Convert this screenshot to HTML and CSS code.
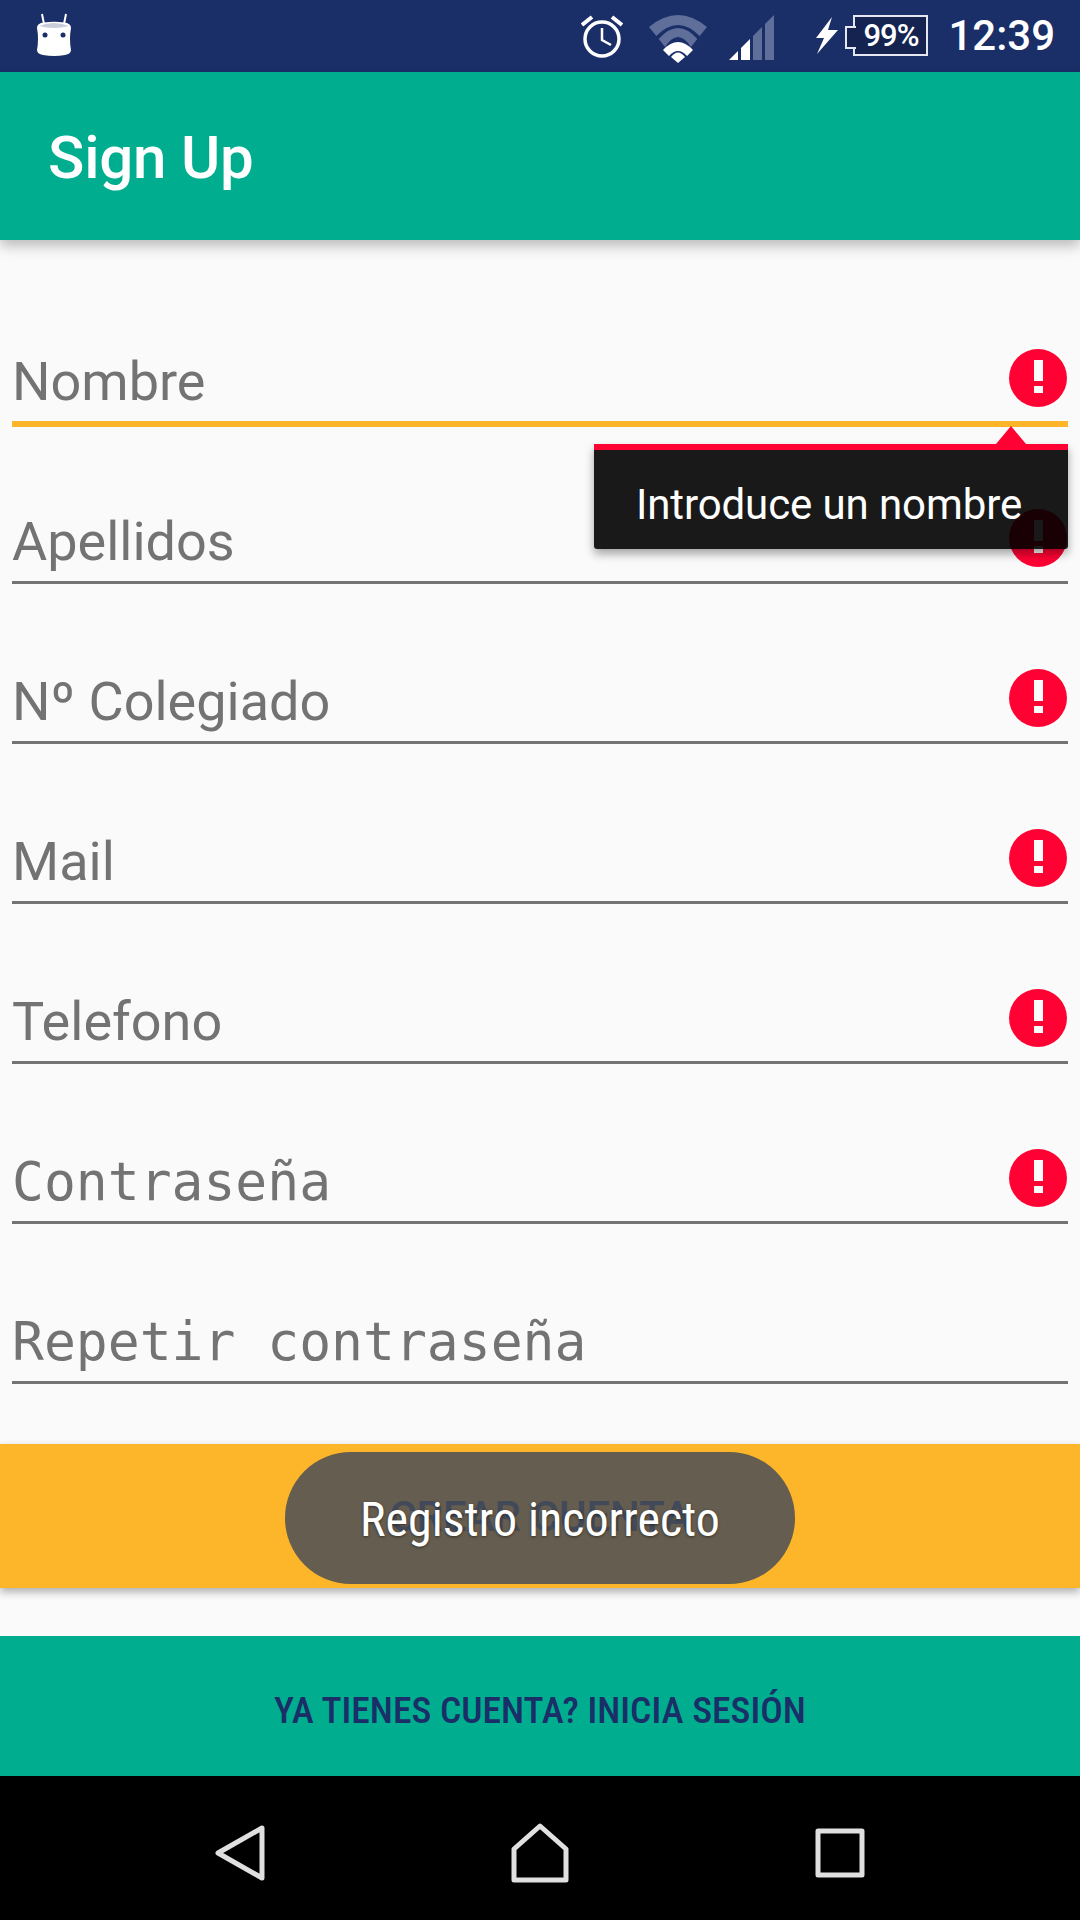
FILE: index.html
```html
<!DOCTYPE html>
<html lang="es">
<head>
  <meta charset="UTF-8">
  <meta name="viewport" content="width=device-width, initial-scale=1.0">
  <title>Sign Up</title>
  <link rel="stylesheet" href="styles.css">
</head>
<body>
  <div class="page">

    <div class="status-bar">
      <svg class="ic-android" width="36" height="46" viewBox="0 0 36 46">
        <path d="M8 12L6 2M28 12L30 2" stroke="#fff" stroke-width="2"/>
        <path d="M1 16Q1 11 8 10.500Q18 9 28 10.500Q35 11 35 16Q33 27 35 38Q35 42 29 43Q18 45 7 43Q1 42 1 38Q3 27 1 16Z" fill="#fff"/>
        <path d="M3 14Q18 8 33 14Q18 18 3 14Z" fill="#c9cdd9"/>
        <circle cx="9" cy="23" r="2.500" fill="#1a2e68"/>
        <circle cx="27" cy="23" r="2.500" fill="#1a2e68"/>
      </svg>
      <div class="status-right">
        <svg class="ic-alarm" width="42" height="44" viewBox="0 0 42 44">
          <circle cx="21" cy="24" r="17" fill="none" stroke="#fff" stroke-width="3.500"/>
          <path d="M21 13V25L30 30" fill="none" stroke="#fff" stroke-width="2.500"/>
          <path d="M1 10L11 2M41 10L31 2" stroke="#fff" stroke-width="4"/>
        </svg>
        <svg class="ic-wifi" width="58" height="48" viewBox="0 0 58 48">
          <path d="M0 12Q29 -12 58 12L50.700 21Q29 -1 7.300 21Z" fill="#5f6f9a"/>
          <path d="M9.700 24Q29 2 48.300 24L41.900 32Q29 12 16.100 32Z" fill="#5f6f9a"/>
          <path d="M14 35Q29 19 44 35L38 41Q29 31 20 41Z" fill="#fff"/>
          <path d="M22 42Q29 33 36 42L29 48Z" fill="#fff"/>
        </svg>
        <svg class="ic-signal" width="45" height="45" viewBox="0 0 45 45">
          <path d="M0 45H9V36Z" fill="#fff"/>
          <path d="M12 45H21V24L12 33Z" fill="#fff"/>
          <path d="M24 45H33V12L24 21Z" fill="#5f6f9a"/>
          <path d="M36 45H45V0L36 9Z" fill="#5f6f9a"/>
        </svg>
        <svg class="ic-bolt" width="23" height="37" viewBox="0 0 23 37">
          <path d="M17 0L1 21H9L2 37L23 13H13Z" fill="#fff"/>
        </svg>
        <div class="battery"><span class="battery-text">99%</span></div>
        <span class="clock">12:39</span>
      </div>
    </div>

    <header class="app-bar">
      <h1 class="app-title">Sign Up</h1>
    </header>

    <main class="form">
      <div class="field focused">
        <span class="label">Nombre</span>
        <span class="error-icon"><i class="mark"></i><i class="dot"></i></span>
      </div>
      <div class="field">
        <span class="label">Apellidos</span>
        <span class="error-icon"><i class="mark"></i><i class="dot"></i></span>
      </div>
      <div class="field">
        <span class="label">Nº Colegiado</span>
        <span class="error-icon"><i class="mark"></i><i class="dot"></i></span>
      </div>
      <div class="field">
        <span class="label">Mail</span>
        <span class="error-icon"><i class="mark"></i><i class="dot"></i></span>
      </div>
      <div class="field">
        <span class="label">Telefono</span>
        <span class="error-icon"><i class="mark"></i><i class="dot"></i></span>
      </div>
      <div class="field">
        <span class="label mono">Contraseña</span>
        <span class="error-icon"><i class="mark"></i><i class="dot"></i></span>
      </div>
      <div class="field">
        <span class="label mono">Repetir contraseña</span>
      </div>
    </main>

    <button class="btn-create">CREAR CUENTA</button>
    <button class="btn-login">YA TIENES CUENTA? INICIA SESIÓN</button>

    <nav class="nav-bar">
      <svg width="50" height="56" viewBox="0 0 50 56">
        <path d="M47 3V53L3 28Z" fill="none" stroke="#e0e0e0" stroke-width="5" stroke-linejoin="round"/>
      </svg>
      <svg width="58" height="60" viewBox="0 0 58 60">
        <path d="M3 57V26L29 3L55 26V57Z" fill="none" stroke="#e0e0e0" stroke-width="5" stroke-linejoin="round"/>
      </svg>
      <svg width="50" height="50" viewBox="0 0 50 50">
        <rect x="3" y="3" width="44" height="44" fill="none" stroke="#e0e0e0" stroke-width="5" stroke-linejoin="round"/>
      </svg>
    </nav>

    <div class="error-popup">
      <span class="popup-arrow"></span>
      Introduce un nombre
    </div>

    <div class="toast"><span class="toast-text">Registro incorrecto</span></div>

  </div>
</body>
</html>
```
FILE: styles.css
```css
* {
  box-sizing: border-box;
}

body {
  margin: 0;
  background-color: #fafafa;
  font-family: 'Roboto', sans-serif;
}

.page {
  position: relative;
  width: 1080px;
  height: 1920px;
  display: flex;
  flex-direction: column;
  overflow: hidden;
}

/* status bar */
.status-bar {
  height: 72px;
  flex: none;
  background-color: #1a2e68;
  display: flex;
  justify-content: space-between;
  align-items: flex-start;
  padding: 0 25px 0 36px;
}

.ic-android {
  margin-top: 12px;
}

.status-right {
  display: flex;
  align-items: flex-start;
}

.ic-alarm {
  margin-top: 15px;
  margin-right: 26px;
}

.ic-wifi {
  margin-top: 15px;
  margin-right: 22px;
}

.ic-signal {
  margin-top: 15px;
  margin-right: 41px;
}

.ic-bolt {
  margin-top: 17px;
  margin-right: 15px;
}

.battery {
  position: relative;
  width: 75px;
  height: 41px;
  margin-top: 15px;
  margin-right: 20px;
  border: 2px solid #e4e7ef;
  background-color: #14234f;
  display: flex;
  align-items: center;
  justify-content: center;
}

.battery::before {
  content: '';
  position: absolute;
  left: -10px;
  top: 9px;
  width: 9px;
  height: 19px;
  border: 2px solid #e4e7ef;
  border-right: none;
  background-color: #14234f;
}

.battery-text {
  color: #fff;
  font-size: 31px;
  font-weight: 500;
  letter-spacing: -1px;
}

.clock {
  color: #fff;
  font-size: 42px;
  font-weight: 500;
  line-height: 72px;
}

/* app bar */
.app-bar {
  height: 168px;
  flex: none;
  background-color: #00ae8f;
  display: flex;
  align-items: center;
  padding-left: 48px;
  padding-top: 2px;
  box-shadow: 0 6px 12px rgba(0,0,0,0.25);
  z-index: 1;
}

.app-title {
  margin: 0;
  color: #fff;
  font-size: 60px;
  font-weight: 500;
  letter-spacing: -0.2px;
}

/* form */
.form {
  padding: 24px 12px 0;
}

.field {
  height: 160px;
  display: flex;
  justify-content: space-between;
  align-items: flex-end;
  border-bottom: 3px solid #737373;
}

.field.focused {
  height: 163px;
  border-bottom: 6px solid #fdb62a;
  margin-bottom: -3px;
}

.label {
  color: #737373;
  font-size: 54px;
  line-height: 64px;
  padding-bottom: 7px;
}

.mono {
  font-family: 'DejaVu Sans Mono', monospace;
  font-size: 53px;
}

.error-icon {
  width: 58px;
  height: 58px;
  margin: 0 1px 14px 0;
  border-radius: 50%;
  background-color: #ff0233;
  display: flex;
  flex-direction: column;
  align-items: center;
  padding-top: 11px;
}

.error-icon .mark {
  width: 9px;
  height: 21px;
  background-color: #fafafa;
}

.error-icon .dot {
  width: 9px;
  height: 7px;
  margin-top: 5px;
  background-color: #fafafa;
}

/* buttons */
.btn-create {
  height: 144px;
  flex: none;
  margin-top: 60px;
  border: none;
  background-color: #fdb62a;
  color: #1a2e68;
  font-family: 'Roboto', sans-serif;
  font-size: 42px;
  font-weight: 500;
  box-shadow: 0 4px 8px rgba(0,0,0,0.3);
}

.btn-login {
  height: 140px;
  flex: none;
  margin-top: 48px;
  padding-top: 8px;
  border: none;
  background-color: #00ae8f;
  color: #1a2e68;
  font-family: 'Roboto', sans-serif;
  font-size: 37.500px;
  font-weight: 500;
  font-stretch: condensed;
}

/* nav bar */
.nav-bar {
  flex: 1;
  background-color: #000;
  padding: 10px 90px 0;
  display: grid;
  grid-template-columns: 1fr 1fr 1fr;
  align-items: center;
  justify-items: center;
}

/* overlays */
.error-popup {
  position: absolute;
  left: 594px;
  top: 444px;
  width: 474px;
  height: 105px;
  padding-top: 14px;
  padding-right: 4px;
  border-top: 6px solid #ff0233;
  border-radius: 0 0 3px 3px;
  background-color: rgba(0,0,0,0.9);
  box-shadow: 0 5px 10px rgba(0,0,0,0.35);
  color: #fff;
  font-size: 42px;
  letter-spacing: -0.1px;
  line-height: 82px;
  text-align: center;
}

.popup-arrow {
  position: absolute;
  left: 402px;
  top: -24px;
  width: 0;
  height: 0;
  border-left: 15px solid transparent;
  border-right: 15px solid transparent;
  border-bottom: 18px solid #ff0233;
}

.toast {
  position: absolute;
  left: 285px;
  top: 1452px;
  width: 510px;
  height: 132px;
  padding-top: 2px;
  border-radius: 66px;
  background-color: rgba(74,78,86,0.85);
  display: flex;
  align-items: center;
  justify-content: center;
}

.toast-text {
  color: #fff;
  font-size: 48px;
  font-stretch: condensed;
  text-shadow: 0 1px 3px rgba(0,0,0,0.5);
}
```
